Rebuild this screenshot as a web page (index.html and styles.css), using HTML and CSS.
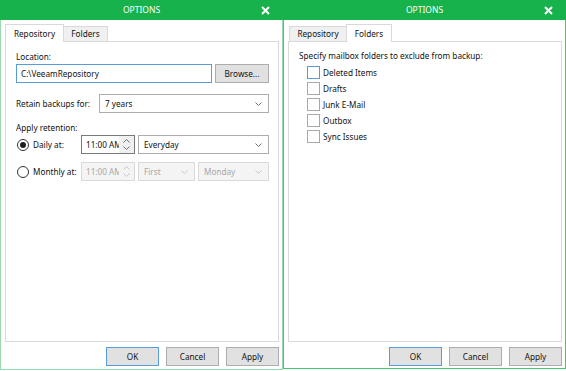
FILE: index.html
```html
<!DOCTYPE html>
<html lang="en">

    <head>
        <meta charset="UTF-8">
        <meta name="viewport" content="width=device-width, initial-scale=1.0">
        <title>Options</title>

        <link rel="stylesheet" href="styles.css">
    </head>

    <body>
        <div class="desk">
            <!-- repository tab -->
            <div class="win">
                <div class="win__title">
                    <span class="win__caption">OPTIONS</span>
                    <svg class="win__close" width="9" height="9" viewBox="0 0 9 9">
                        <path d="M1 1L8 8M8 1L1 8" stroke="#fff" stroke-width="2" fill="none" />
                    </svg>
                </div>
                <div class="win__body">
                    <div class="tabs">
                        <div class="tab tab--on tab--repo">Repository</div>
                        <div class="tab tab--folders">Folders</div>
                    </div>
                    <div class="panel">
                        <div class="label label--first">Location:</div>
                        <div class="row">
                            <div class="textbox textbox--focus">C:\VeeamRepository</div>
                            <div class="btn btn--browse">Browse...</div>
                        </div>
                        <div class="row row--retain">
                            <div class="row__label">Retain backups for:</div>
                            <div class="combo combo--retain">
                                <span>7 years</span>
                                <svg class="combo__arrow" width="7" height="4" viewBox="0 0 7 4">
                                    <path d="M0.5 0.5L3.5 3.5L6.5 0.5" stroke="#707070" fill="none" />
                                </svg>
                            </div>
                        </div>
                        <div class="label label--apply">Apply retention:</div>
                        <div class="schedule">
                            <div class="radio-line">
                                <span class="radio radio--on"></span>
                                <span>Daily at:</span>
                            </div>
                            <div class="spin">
                                <span class="spin__text">11:00 AM</span>
                                <span class="spin__btns">
                                    <svg width="7" height="4" viewBox="0 0 7 4">
                                        <path d="M0.5 3.5L3.5 0.5L6.5 3.5" stroke="#707070" fill="none" />
                                    </svg>
                                    <svg width="7" height="4" viewBox="0 0 7 4">
                                        <path d="M0.5 0.5L3.5 3.5L6.5 0.5" stroke="#707070" fill="none" />
                                    </svg>
                                </span>
                            </div>
                            <div class="combo">
                                <span>Everyday</span>
                                <svg class="combo__arrow" width="7" height="4" viewBox="0 0 7 4">
                                    <path d="M0.5 0.5L3.5 3.5L6.5 0.5" stroke="#707070" fill="none" />
                                </svg>
                            </div>

                            <div class="radio-line">
                                <span class="radio"></span>
                                <span>Monthly at:</span>
                            </div>
                            <div class="spin spin--off">
                                <span class="spin__text">11:00 AM</span>
                                <span class="spin__btns">
                                    <svg width="7" height="4" viewBox="0 0 7 4">
                                        <path d="M0.5 3.5L3.5 0.5L6.5 3.5" stroke="#c8c8c8" fill="none" />
                                    </svg>
                                    <svg width="7" height="4" viewBox="0 0 7 4">
                                        <path d="M0.5 0.5L3.5 3.5L6.5 0.5" stroke="#c8c8c8" fill="none" />
                                    </svg>
                                </span>
                            </div>
                            <div class="pair">
                                <div class="combo combo--off combo--first">
                                    <span>First</span>
                                    <svg class="combo__arrow" width="7" height="4" viewBox="0 0 7 4">
                                        <path d="M0.5 0.5L3.5 3.5L6.5 0.5" stroke="#c8c8c8" fill="none" />
                                    </svg>
                                </div>
                                <div class="combo combo--off">
                                    <span>Monday</span>
                                    <svg class="combo__arrow" width="7" height="4" viewBox="0 0 7 4">
                                        <path d="M0.5 0.5L3.5 3.5L6.5 0.5" stroke="#c8c8c8" fill="none" />
                                    </svg>
                                </div>
                            </div>
                        </div>
                    </div>
                    <div class="footer">
                        <div class="btn btn--default">OK</div>
                        <div class="btn">Cancel</div>
                        <div class="btn">Apply</div>
                    </div>
                </div>
            </div>

            <!-- folders tab -->
            <div class="win win--active">
                <div class="win__title">
                    <span class="win__caption">OPTIONS</span>
                    <svg class="win__close" width="9" height="9" viewBox="0 0 9 9">
                        <path d="M1 1L8 8M8 1L1 8" stroke="#fff" stroke-width="2" fill="none" />
                    </svg>
                </div>
                <div class="win__body">
                    <div class="tabs">
                        <div class="tab tab--repo-off">Repository</div>
                        <div class="tab tab--on tab--folders-on">Folders</div>
                    </div>
                    <div class="panel">
                        <div class="label label--intro">Specify mailbox folders to exclude from backup:</div>
                        <ul class="checks">
                            <li class="check"><span class="check__box check__box--hover"></span>Deleted Items</li>
                            <li class="check"><span class="check__box"></span>Drafts</li>
                            <li class="check"><span class="check__box"></span>Junk E-Mail</li>
                            <li class="check"><span class="check__box"></span>Outbox</li>
                            <li class="check"><span class="check__box"></span>Sync Issues</li>
                        </ul>
                    </div>
                    <div class="footer">
                        <div class="btn btn--default">OK</div>
                        <div class="btn">Cancel</div>
                        <div class="btn">Apply</div>
                    </div>
                </div>
            </div>
        </div>
    </body>

</html>
```

FILE: styles.css
```css
* {
    margin: 0;
    padding: 0;
    box-sizing: border-box;
}

body {
    font-family: "Noto Sans", "Open Sans", sans-serif;
    font-size: 8.2px;
    color: #111;
    background-color: #fff;
}

.desk {
    display: flex;
    align-items: flex-start;
}

.win {
    width: 283px;
    height: 370px;
    border: 1px solid #96dcae;
    display: flex;
    flex-direction: column;
    background-color: #fff;
}

.win--active {
    height: 369px;
    border-color: #3fca71;
}

.win__title {
    margin: -1px -1px 0;
    height: 20px;
    background-color: #17b24b;
    color: #fff;
    display: grid;
    grid-template-columns: 1fr auto 1fr;
    align-items: center;
}

.win__caption {
    grid-column: 2;
    font-size: 8.5px;
    line-height: 20px;
}

.win__close {
    justify-self: end;
    margin-right: 13px;
}

.win__body {
    padding: 4px 3px 0 4px;
    display: flex;
    flex-direction: column;
}

/* tabs */
.tabs {
    display: flex;
    align-items: flex-start;
    height: 18px;
    position: relative;
    z-index: 1;
}

.tab {
    height: 15px;
    margin-top: 2px;
    border: 1px solid #d9d9d9;
    border-bottom: none;
    background-color: #f0f0f0;
    text-align: center;
    line-height: 14px;
}

.tab--on {
    height: 18px;
    margin-top: 0;
    background-color: #fff;
    line-height: 17px;
}

.tab--repo {
    width: 59px;
}

.tab--folders {
    width: 44px;
    border-left: none;
}

.tab--repo-off {
    width: 57px;
    margin-left: 1px;
    border-right: none;
}

.tab--folders-on {
    width: 46px;
}

.panel {
    margin-top: -1px;
    height: 301px;
    border: 1px solid #d9d9d9;
    padding: 0 9px 0 10px;
}

.label {
    line-height: 15px;
}

.label--first {
    margin-top: 7px;
}

.label--apply {
    margin-top: 7px;
}

.label--intro {
    margin-top: 6px;
}

.row {
    display: flex;
    align-items: center;
    gap: 3px;
    height: 19px;
}

.row--retain {
    margin-top: 11px;
    justify-content: space-between;
}

.textbox {
    flex: 1;
    height: 19px;
    border: 1px solid #a0a0a0;
    padding-left: 4px;
    line-height: 17px;
    white-space: nowrap;
}

.textbox--focus {
    border-color: #5b9bd5;
}

.btn {
    width: 53px;
    height: 19px;
    border: 1px solid #adadad;
    background-color: #e1e1e1;
    text-align: center;
    line-height: 17px;
}

.btn--browse {
    width: 54px;
}

.btn--default {
    border-color: #5b9bd5;
}

.combo {
    height: 19px;
    border: 1px solid #acacac;
    background-color: #fff;
    display: flex;
    align-items: center;
    justify-content: space-between;
    padding: 0 6px 0 5px;
    white-space: nowrap;
}

.combo--retain {
    width: 170px;
}

.combo--off {
    flex: 1;
    background-color: #f4f4f4;
    border-color: #d9d9d9;
    color: #a8a8a8;
}

.combo--first {
    flex: 0 0 57px;
}

/* schedule grid */
.schedule {
    display: grid;
    grid-template-columns: 62px 54px 1fr;
    grid-auto-rows: 19px;
    column-gap: 3px;
    row-gap: 8px;
}

.radio-line {
    display: flex;
    align-items: center;
    gap: 4px;
    white-space: nowrap;
}

.radio {
    width: 12px;
    height: 12px;
    margin-left: 1px;
    border: 1px solid #333;
    border-radius: 50%;
    display: grid;
    place-items: center;
}

.radio--on::after {
    content: "";
    width: 6px;
    height: 6px;
    border-radius: 50%;
    background-color: #1e1e1e;
}

.spin {
    display: flex;
    height: 19px;
    border: 1px solid #7a7a7a;
    background-color: #fff;
}

.spin__text {
    flex: 1;
    overflow: hidden;
    white-space: nowrap;
    padding-left: 4px;
    line-height: 17px;
}

.spin__btns {
    width: 15px;
    background-color: #f0f0f0;
    display: flex;
    flex-direction: column;
    align-items: center;
    justify-content: space-around;
    padding: 1px 0;
}

.spin--off {
    border-color: #d9d9d9;
    background-color: #f4f4f4;
    color: #a8a8a8;
}

.spin--off .spin__btns {
    background-color: #f4f4f4;
}

.pair {
    display: flex;
    gap: 3px;
}

/* folders list */
.checks {
    list-style: none;
    margin-top: 1px;
    padding-left: 8px;
}

.check {
    display: flex;
    align-items: center;
    gap: 3px;
    height: 16px;
}

.check__box {
    width: 13px;
    height: 13px;
    border: 1px solid #a8a8a8;
    background-color: #fff;
}

.check__box--hover {
    border-color: #5b9bd5;
}

.footer {
    margin-top: 5px;
    display: flex;
    justify-content: flex-end;
    gap: 7px;
}
```
